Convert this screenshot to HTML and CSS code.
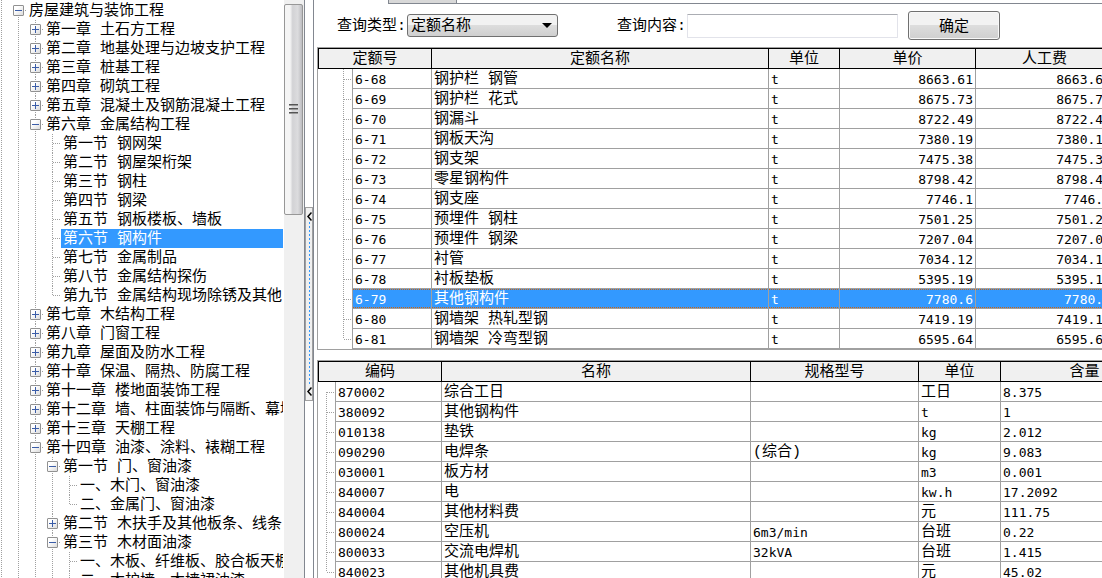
FILE: index.html
```html
<!DOCTYPE html>
<html lang="zh-CN">
<head>
    <meta charset="UTF-8">
    <meta name="viewport" content="width=device-width, initial-scale=1.0">
    <title>定额查询</title>
    <link rel="stylesheet" href="styles.css">
</head>
<body>
    <nav class="sidebar">
        <ul class="tree">
            <li>
                <div class="row"><span class="branch"><button class="toggle" aria-label="折叠"></button></span><span class="label">房屋建筑与装饰工程</span></div>
                <ul>
                    <li><div class="row"><span class="branch"><button class="toggle closed" aria-label="展开"></button></span><span class="label">第一章 土石方工程</span></div></li>
                    <li><div class="row"><span class="branch"><button class="toggle closed" aria-label="展开"></button></span><span class="label">第二章 地基处理与边坡支护工程</span></div></li>
                    <li><div class="row"><span class="branch"><button class="toggle closed" aria-label="展开"></button></span><span class="label">第三章 桩基工程</span></div></li>
                    <li><div class="row"><span class="branch"><button class="toggle closed" aria-label="展开"></button></span><span class="label">第四章 砌筑工程</span></div></li>
                    <li><div class="row"><span class="branch"><button class="toggle closed" aria-label="展开"></button></span><span class="label">第五章 混凝土及钢筋混凝土工程</span></div></li>
                    <li>
                        <div class="row"><span class="branch"><button class="toggle" aria-label="折叠"></button></span><span class="label">第六章 金属结构工程</span></div>
                        <ul>
                            <li><div class="row"><span class="branch"></span><span class="label">第一节 钢网架</span></div></li>
                            <li><div class="row"><span class="branch"></span><span class="label">第二节 钢屋架桁架</span></div></li>
                            <li><div class="row"><span class="branch"></span><span class="label">第三节 钢柱</span></div></li>
                            <li><div class="row"><span class="branch"></span><span class="label">第四节 钢梁</span></div></li>
                            <li><div class="row"><span class="branch"></span><span class="label">第五节 钢板楼板、墙板</span></div></li>
                            <li><div class="row"><span class="branch"></span><span class="label selected">第六节 钢构件</span></div></li>
                            <li><div class="row"><span class="branch"></span><span class="label">第七节 金属制品</span></div></li>
                            <li><div class="row"><span class="branch"></span><span class="label">第八节 金属结构探伤</span></div></li>
                            <li><div class="row"><span class="branch"></span><span class="label">第九节 金属结构现场除锈及其他</span></div></li>
                        </ul>
                    </li>
                    <li><div class="row"><span class="branch"><button class="toggle closed" aria-label="展开"></button></span><span class="label">第七章 木结构工程</span></div></li>
                    <li><div class="row"><span class="branch"><button class="toggle closed" aria-label="展开"></button></span><span class="label">第八章 门窗工程</span></div></li>
                    <li><div class="row"><span class="branch"><button class="toggle closed" aria-label="展开"></button></span><span class="label">第九章 屋面及防水工程</span></div></li>
                    <li><div class="row"><span class="branch"><button class="toggle closed" aria-label="展开"></button></span><span class="label">第十章 保温、隔热、防腐工程</span></div></li>
                    <li><div class="row"><span class="branch"><button class="toggle closed" aria-label="展开"></button></span><span class="label">第十一章 楼地面装饰工程</span></div></li>
                    <li><div class="row"><span class="branch"><button class="toggle closed" aria-label="展开"></button></span><span class="label">第十二章 墙、柱面装饰与隔断、幕墙工程</span></div></li>
                    <li><div class="row"><span class="branch"><button class="toggle closed" aria-label="展开"></button></span><span class="label">第十三章 天棚工程</span></div></li>
                    <li class="more">
                        <div class="row"><span class="branch"><button class="toggle" aria-label="折叠"></button></span><span class="label">第十四章 油漆、涂料、裱糊工程</span></div>
                        <ul>
                            <li>
                                <div class="row"><span class="branch"><button class="toggle" aria-label="折叠"></button></span><span class="label">第一节 门、窗油漆</span></div>
                                <ul>
                                    <li><div class="row"><span class="branch"></span><span class="label">一、木门、窗油漆</span></div></li>
                                    <li><div class="row"><span class="branch"></span><span class="label">二、金属门、窗油漆</span></div></li>
                                </ul>
                            </li>
                            <li><div class="row"><span class="branch"><button class="toggle closed" aria-label="展开"></button></span><span class="label">第二节 木扶手及其他板条、线条</span></div></li>
                            <li class="more">
                                <div class="row"><span class="branch"><button class="toggle" aria-label="折叠"></button></span><span class="label">第三节 木材面油漆</span></div>
                                <ul>
                                    <li><div class="row"><span class="branch"></span><span class="label">一、木板、纤维板、胶合板天棚</span></div></li>
                                    <li class="more"><div class="row"><span class="branch"></span><span class="label">二、木护墙、木墙裙油漆</span></div></li>
                                </ul>
                            </li>
                        </ul>
                    </li>
                </ul>
            </li>
        </ul>
        <div class="scrollbar">
            <div class="thumb"><span class="grip"></span></div>
        </div>
    </nav>

    <div class="splitter">
        <button class="collapse" aria-label="收起">
            <svg width="5" height="9" viewBox="0 0 5 9"><path d="M4.5 0.5L1 4.5L4.5 8.5" fill="none" stroke="#000" stroke-width="1.5"/></svg>
            <span class="dots"></span>
            <svg width="5" height="9" viewBox="0 0 5 9"><path d="M4.5 0.5L1 4.5L4.5 8.5" fill="none" stroke="#000" stroke-width="1.5"/></svg>
        </button>
    </div>

    <main class="content">
        <div class="tabs">
            <span class="tab-active"></span>
            <span class="tab"></span>
        </div>

        <form class="query">
            <label for="queryType">查询类型:</label>
            <span class="select">
                <select id="queryType">
                    <option>定额名称</option>
                    <option>定额号</option>
                </select>
            </span>
            <label for="queryText" class="second">查询内容:</label>
            <input type="text" id="queryText">
            <button type="button" class="ok">确定</button>
        </form>

        <div class="grid">
            <table class="quota">
                <colgroup>
                    <col class="q-branch"><col class="q-code"><col class="q-name"><col class="q-unit"><col class="q-price"><col class="q-labor">
                </colgroup>
                <thead>
                    <tr><th colspan="2">定额号</th><th>定额名称</th><th>单位</th><th>单价</th><th>人工费</th></tr>
                </thead>
                <tbody>
                    <tr><td class="line"></td><td class="en">6-68</td><td>钢护栏 钢管</td><td class="en">t</td><td class="en num">8663.61</td><td class="en num">8663.61</td></tr>
                    <tr><td class="line"></td><td class="en">6-69</td><td>钢护栏 花式</td><td class="en">t</td><td class="en num">8675.73</td><td class="en num">8675.73</td></tr>
                    <tr><td class="line"></td><td class="en">6-70</td><td>钢漏斗</td><td class="en">t</td><td class="en num">8722.49</td><td class="en num">8722.49</td></tr>
                    <tr><td class="line"></td><td class="en">6-71</td><td>钢板天沟</td><td class="en">t</td><td class="en num">7380.19</td><td class="en num">7380.19</td></tr>
                    <tr><td class="line"></td><td class="en">6-72</td><td>钢支架</td><td class="en">t</td><td class="en num">7475.38</td><td class="en num">7475.38</td></tr>
                    <tr><td class="line"></td><td class="en">6-73</td><td>零星钢构件</td><td class="en">t</td><td class="en num">8798.42</td><td class="en num">8798.42</td></tr>
                    <tr><td class="line"></td><td class="en">6-74</td><td>钢支座</td><td class="en">t</td><td class="en num">7746.1</td><td class="en num">7746.1</td></tr>
                    <tr><td class="line"></td><td class="en">6-75</td><td>预埋件 钢柱</td><td class="en">t</td><td class="en num">7501.25</td><td class="en num">7501.25</td></tr>
                    <tr><td class="line"></td><td class="en">6-76</td><td>预埋件 钢梁</td><td class="en">t</td><td class="en num">7207.04</td><td class="en num">7207.04</td></tr>
                    <tr><td class="line"></td><td class="en">6-77</td><td>衬管</td><td class="en">t</td><td class="en num">7034.12</td><td class="en num">7034.12</td></tr>
                    <tr><td class="line"></td><td class="en">6-78</td><td>衬板垫板</td><td class="en">t</td><td class="en num">5395.19</td><td class="en num">5395.19</td></tr>
                    <tr class="current"><td class="line"></td><td class="en">6-79</td><td>其他钢构件</td><td class="en">t</td><td class="en num">7780.6</td><td class="en num">7780.6</td></tr>
                    <tr><td class="line"></td><td class="en">6-80</td><td>钢墙架 热轧型钢</td><td class="en">t</td><td class="en num">7419.19</td><td class="en num">7419.19</td></tr>
                    <tr><td class="line"></td><td class="en">6-81</td><td>钢墙架 冷弯型钢</td><td class="en">t</td><td class="en num">6595.64</td><td class="en num">6595.64</td></tr>
                </tbody>
            </table>
        </div>

        <div class="grid">
            <table class="parts">
                <colgroup>
                    <col class="p-branch"><col class="p-code"><col class="p-name"><col class="p-spec"><col class="p-unit"><col class="p-amount">
                </colgroup>
                <thead>
                    <tr><th colspan="2">编码</th><th>名称</th><th>规格型号</th><th>单位</th><th>含量</th></tr>
                </thead>
                <tbody>
                    <tr><td class="line"></td><td class="en">870002</td><td>综合工日</td><td></td><td>工日</td><td class="en">8.375</td></tr>
                    <tr><td class="line"></td><td class="en">380092</td><td>其他钢构件</td><td></td><td class="en">t</td><td class="en">1</td></tr>
                    <tr><td class="line"></td><td class="en">010138</td><td>垫铁</td><td></td><td class="en">kg</td><td class="en">2.012</td></tr>
                    <tr><td class="line"></td><td class="en">090290</td><td>电焊条</td><td>(综合)</td><td class="en">kg</td><td class="en">9.083</td></tr>
                    <tr><td class="line"></td><td class="en">030001</td><td>板方材</td><td></td><td class="en">m3</td><td class="en">0.001</td></tr>
                    <tr><td class="line"></td><td class="en">840007</td><td>电</td><td></td><td class="en">kw.h</td><td class="en">17.2092</td></tr>
                    <tr><td class="line"></td><td class="en">840004</td><td>其他材料费</td><td></td><td>元</td><td class="en">111.75</td></tr>
                    <tr><td class="line"></td><td class="en">800024</td><td>空压机</td><td class="en">6m3/min</td><td>台班</td><td class="en">0.22</td></tr>
                    <tr><td class="line"></td><td class="en">800033</td><td>交流电焊机</td><td class="en">32kVA</td><td>台班</td><td class="en">1.415</td></tr>
                    <tr><td class="line"></td><td class="en">840023</td><td>其他机具费</td><td></td><td>元</td><td class="en">45.02</td></tr>
                </tbody>
            </table>
        </div>
    </main>
</body>
</html>
```
FILE: styles.css
```css
* {
    box-sizing: border-box;
}
:root {
    --dots-v: repeating-linear-gradient(#a0a0a0 0 1px, transparent 1px 2px);
    --dots-h: repeating-linear-gradient(90deg, #a0a0a0 0 1px, transparent 1px 2px);
}
body {
    display: flex;
    height: 100vh;
    margin: 0;
    overflow: hidden;
    background-color: #fff;
    color: #000;
    font-family: "Liberation Mono", "Noto Sans CJK SC", monospace;
    font-size: 15px;
    line-height: 19px;
}
button, input, select {
    font: inherit;
    color: inherit;
}

/* left: chapter tree */
.sidebar {
    display: flex;
    flex: 0 0 305px;
    overflow: hidden;
    border-right: 1px solid #828790;
}
.tree {
    flex: 1;
    min-width: 0;
    height: max-content;
    min-height: 100%;
    margin: 0;
    padding: 1px 1px 0 10px;
    list-style: none;
    background: var(--dots-v) 1px 0 / 1px 100% no-repeat;
}
.tree ul {
    margin: 0;
    padding: 0 0 0 17px;
    list-style: none;
}
.tree li {
    background: var(--dots-v) 8px 0 / 1px 100% no-repeat;
}
.tree > li {
    background-position: 8px 10px;
}
.tree ul > li:last-child:not(.more) {
    background-size: 1px 10px;
}
.row {
    display: flex;
    height: 19px;
}
.branch {
    display: flex;
    align-items: center;
    flex: 0 0 17px;
    padding-left: 3px;
    background: var(--dots-h) 9px 9px / 8px 1px no-repeat;
}
.toggle {
    width: 11px;
    height: 11px;
    padding: 0;
    border: 1px solid #919191;
    border-radius: 1px;
    background:
        linear-gradient(#3b5da8, #3b5da8) center / 7px 1px no-repeat,
        linear-gradient(135deg, #fff 30%, #dcdcdc);
}
.toggle.closed {
    background:
        linear-gradient(#3b5da8, #3b5da8) center / 7px 1px no-repeat,
        linear-gradient(#3b5da8, #3b5da8) center / 1px 7px no-repeat,
        linear-gradient(135deg, #fff 30%, #dcdcdc);
}
.label {
    flex: 1;
    min-width: 0;
    padding: 0 2px;
    line-height: 21px;
    white-space: nowrap;
    overflow-x: clip;
    overflow-clip-margin: content-box;
}
.label.selected {
    background-color: #3399ff;
    color: #fff;
}
.scrollbar {
    flex: 0 0 20px;
    padding: 4px 1px 0 0;
    background-color: #f0f0f0;
}
.thumb {
    display: flex;
    align-items: center;
    justify-content: center;
    height: 211px;
    border: 1px solid #979797;
    border-radius: 2px;
    background: linear-gradient(90deg, #f5f5f5 30%, #d2d2d5 45%, #dcdcde 75%, #bcbcc0);
}
.grip {
    width: 9px;
    height: 11px;
    background: repeating-linear-gradient(#555 0 1px, #999 1px 2px, transparent 2px 4px);
}

/* splitter between tree and tables */
.splitter {
    flex: 0 0 8px;
    padding-top: 207px;
}
.collapse {
    display: flex;
    flex-direction: column;
    align-items: center;
    gap: 1px;
    width: 100%;
    height: 194px;
    padding: 4px 0;
    border: 1px solid #a0a0a0;
    background-color: #f0f0f0;
}
.dots {
    flex: 1;
    width: 1px;
    background: repeating-linear-gradient(#3399ff 0 2px, transparent 2px 4px);
}

/* right side */
.content {
    flex: 1;
    min-width: 0;
    overflow: hidden;
    padding-left: 3px;
    border-left: 1px solid #828790;
}
.tabs {
    display: flex;
    height: 4px;
}
.tabs::after {
    content: "";
    flex: 1;
    border-bottom: 1px solid #828790;
}
.tab-active {
    width: 71px;
}
.tab {
    width: 69px;
    border: 1px solid #828790;
    border-top: none;
    background-color: #d8d8d8;
}
.query {
    display: flex;
    align-items: center;
    height: 43px;
    padding-left: 20px;
}
.query label {
    flex: 0 0 70px;
    padding-top: 2px;
    white-space: nowrap;
}
.query .second {
    margin-left: 59px;
}
.select {
    position: relative;
    flex: 0 0 151px;
}
.select select {
    display: block;
    width: 100%;
    height: 23px;
    padding: 2px 3px 0;
    border: 1px solid #707070;
    border-radius: 3px;
    background: linear-gradient(#f2f2f2 50%, #dddddd 50%, #cfcfcf);
    appearance: none;
}
.select::after {
    content: "";
    position: absolute;
    top: 9px;
    right: 6px;
    border: 5px solid transparent;
    border-top-color: #000;
    border-bottom: none;
    pointer-events: none;
}
.query input {
    width: 211px;
    height: 24px;
    padding: 0 3px;
    border: 1px solid #e2e3ea;
    border-top-color: #abadb3;
    border-radius: 1px;
}
.ok {
    width: 92px;
    height: 29px;
    margin-left: 10px;
    padding: 4px 0 0;
    border: 1px solid #707070;
    border-radius: 3px;
    background: linear-gradient(#f2f2f2 50%, #dddddd 50%, #cfcfcf);
    box-shadow: inset 0 0 0 1px #f8f8f8;
}
.grid {
    margin-bottom: 10px;
    overflow: hidden;
    border: 1px solid #a0a0a0;
    border-right: none;
}
table {
    table-layout: fixed;
    border-collapse: separate;
    border-spacing: 0;
}
.quota {
    width: 796px;
}
.parts {
    width: 851px;
}
th, td {
    height: 20px;
    padding: 2px 2px 0;
    line-height: 17px;
    white-space: nowrap;
}
th {
    height: 21px;
    border: 1px solid #000;
    border-left: none;
    background-color: #f0f0f0;
    font-weight: normal;
}
th:first-child {
    border-left: 1px solid #000;
}
td {
    border-right: 1px solid #a0a0a0;
    border-bottom: 1px solid #a0a0a0;
    text-align: left;
}
.en {
    font-family: "DejaVu Sans Mono", "Noto Sans CJK SC", monospace;
    font-size: 13px;
}
.num {
    text-align: right;
}
td.line {
    border-bottom: none;
    background: var(--dots-v) right 8px top / 1px 100% no-repeat, var(--dots-h) right 0 center / 8px 1px no-repeat;
}
.quota tr:last-child td.line {
    background-size: 1px 10px, 8px 1px;
}
.parts tr:last-child td.line {
    background-size: 1px 10px, 8px 1px;
}
.parts tbody tr:first-child td.line {
    background-position: right 8px top 10px, right 0 center;
}
.current td:not(.line) {
    background:
        repeating-linear-gradient(90deg, #c86414 0 1px, #3399ff 1px 2px) top / 100% 1px no-repeat,
        repeating-linear-gradient(90deg, #c86414 0 1px, #3399ff 1px 2px) bottom / 100% 1px no-repeat,
        #3399ff;
    background-clip: padding-box;
    background-origin: padding-box;
    color: #fff;
}
.q-branch { width: 35px; }
.q-code { width: 79px; }
.q-name { width: 337px; }
.q-unit { width: 71px; }
.q-price { width: 136px; }
.q-labor { width: 138px; }
.p-branch { width: 18px; }
.p-code { width: 106px; }
.p-name { width: 309px; }
.p-spec { width: 168px; }
.p-unit { width: 82px; }
.p-amount { width: 168px; }
```
